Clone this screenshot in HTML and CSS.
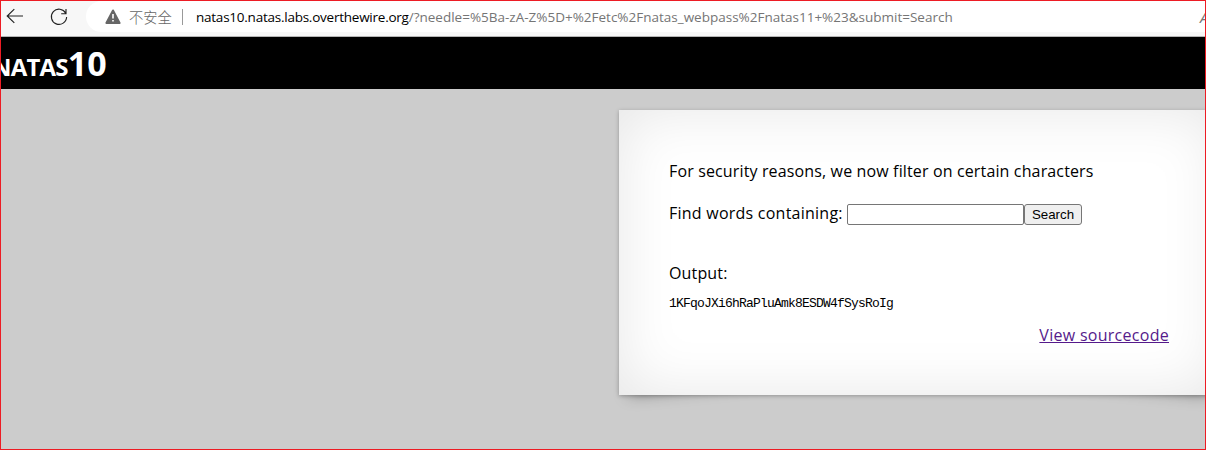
FILE: index.html
```html
<!DOCTYPE html>
<html lang="en">
<head>
<meta charset="utf-8">
<title>natas10</title>
<link rel="stylesheet" href="styles.css">
</head>
<body>
<div class="window">
  <div class="toolbar">
    <svg class="back" width="18" height="16" viewBox="0 0 18 16"><path d="M8.3 1.2 1.2 8l7.1 6.8M1.2 8H17" /></svg>
    <svg class="reload" width="18" height="18" viewBox="0 0 18 18"><path d="M15.7 5.2A7.6 7.6 0 1 0 16.6 9M16 1v4.7h-4.8" /></svg>
    <div class="address">
      <svg class="warning" width="16" height="16" viewBox="0 0 16 16"><path class="tri" d="M8 1.5 14.6 14H1.4Z"/><path class="mark" d="M8 5v4.4M8 11v1.6"/></svg>
      <span class="insecure">不安全</span>
      <span class="divider"></span>
      <span class="url"><span class="host">natas10.natas.labs.overthewire.org</span><span class="query">/?needle=%5Ba-zA-Z%5D+%2Fetc%2Fnatas_webpass%2Fnatas11+%23&amp;submit=Search</span></span>
      <span class="reader">A</span>
    </div>
  </div>
  <h1 class="banner"><span class="title"><span class="name">natas</span>10</span></h1>
  <main class="page">
    <section class="content">
      <p class="notice"><span>For security reasons, we now filter on certain characters</span></p>
      <form class="search"><label for="needle">Find words containing:</label><input id="needle" class="needle"><button type="button" class="submit">Search</button></form>
      <p class="output">Output:</p>
      <pre class="result">1KFqoJXi6hRaPluAmk8ESDW4fSysRoIg</pre>
      <div class="source"><a class="link" href="#">View sourcecode</a></div>
    </section>
  </main>
</div>
</body>
</html>
```
FILE: styles.css
```css
* { box-sizing: border-box; }
body { margin: 0; overflow: hidden; }
.window {
  width: 1206px;
  height: 450px;
  border: 1px solid #ed1c24;
  overflow: hidden;
  background: #ccc;
  font-family: "Open Sans", "Noto Sans", sans-serif;
  font-size: 16px;
  color: #000;
}
.toolbar {
  display: flex;
  height: 36px;
  background: #f7f7f7;
  border-bottom: 1px solid #b5b5b5;
}
.back, .reload { fill: none; stroke: #222; stroke-width: 1.15; flex: none; }
.back { margin: 7px 0 0 5px; }
.reload { margin: 7px 0 0 26px; }
.address {
  display: flex;
  flex: none;
  align-items: center;
  width: 1140px;
  height: 31px;
  margin-left: 18px;
  padding-left: 19px;
  border-radius: 16px;
  background: #fff;
  white-space: nowrap;
  font-size: 13.5px;
}
.warning { flex: none; }
.tri { fill: #666; stroke: #666; stroke-width: 2; stroke-linejoin: round; }
.mark { fill: none; stroke: #fff; stroke-width: 1.6; }
.insecure {
  width: 44px;
  margin-left: 8px;
  font-family: "Noto Sans CJK SC", sans-serif;
  font-size: 14.3px;
  font-weight: 300;
  line-height: 20px;
  color: #666;
}
.divider { width: 1px; height: 16px; margin: 0 13px 0 9px; background: #999; }
.url { display: flex; width: 1004px; }
.host { letter-spacing: -.24px; }
.query { color: #757575; }
.reader { color: #757575; font-size: 15px; font-style: italic; }
.banner {
  height: 52px;
  margin: 0;
  background: #000;
  color: #fff;
  font-size: 34px;
  font-weight: 700;
  line-height: 53px;
}
.title { display: block; margin-left: -9px; font-variant: small-caps; }
.name { letter-spacing: -.8px; }
.page { height: 360px; padding: 21px 0 0 618px; position: relative; z-index: 0; }
.content {
  position: relative;
  width: 600px;
  height: 285px;
  padding: 50px;
  background: #fff;
  box-shadow: 0 1px 4px rgba(0,0,0,.27), inset 0 0 60px rgba(0,0,0,.1);
}
/* Lifted corners under the paper panel */
.content::before, .content::after {
  content: "";
  position: absolute;
  z-index: -1;
  bottom: 20px;
  width: 40%;
  height: 55px;
  box-shadow: 0 8px 16px rgba(0,0,0,.38);
}
.content::before { left: 18px; transform: skew(-15deg) rotate(-6deg); }
.content::after { right: 18px; transform: skew(15deg) rotate(6deg); }
.page::before {
  content: "";
  position: absolute;
  z-index: -2;
  inset: 0;
  background: #ccc;
}
.notice, .output, .result { margin: 0; line-height: 22px; }
.notice { letter-spacing: .14px; }
.search { display: flex; height: 22px; margin: 20px 0 38px; line-height: 22px; }
.search label { width: 178px; white-space: nowrap; letter-spacing: .24px; }
.needle {
  width: 177px;
  height: 21px;
  margin: 2px 0 0;
  border: 1px solid #767676;
  border-radius: 2px;
  background: #fff;
}
.submit {
  width: 58px;
  height: 21px;
  margin: 2px 0 0;
  padding: 0;
  border: 1px solid #767676;
  border-radius: 3px;
  background: #efefef;
  color: #000;
  font: 13.3px/19px "Liberation Sans", sans-serif;
}
.output { letter-spacing: .15px; }
.result {
  margin-top: 9px;
  font-family: "Liberation Mono", monospace;
  font-size: 13px;
  letter-spacing: -.8px;
}
.source { margin-top: 9px; text-align: right; line-height: 22px; }
.link { color: #551a8b; text-decoration: underline; letter-spacing: .28px; }
```
